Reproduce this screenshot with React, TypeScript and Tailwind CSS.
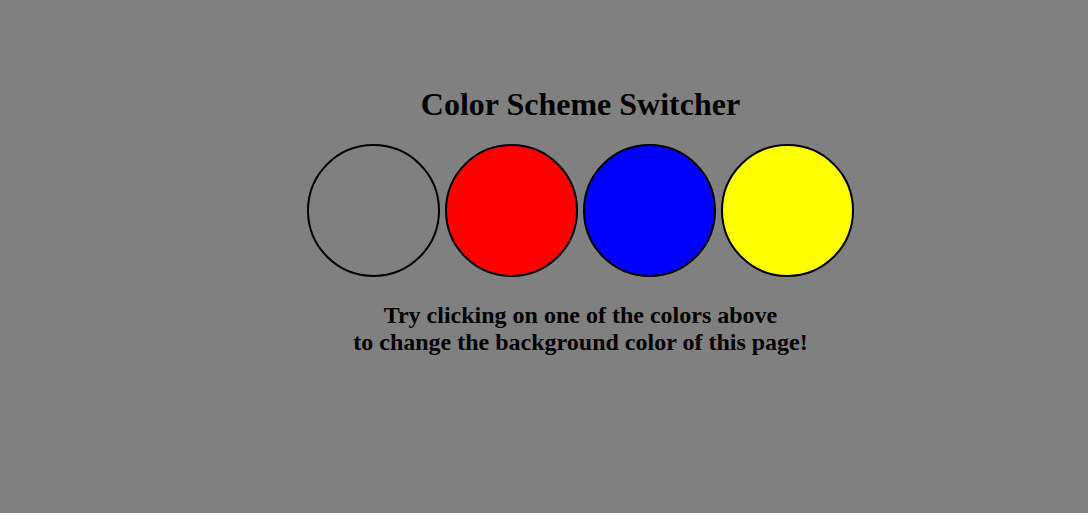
const swatches = [
  "bg-[#808080]",
  "bg-[#ff0000]",
  "bg-[#0000ff]",
  "bg-[#ffff00]",
];

export default function App() {
  return (
    <div className="min-h-[513px] w-full bg-[#808080] text-black font-['Liberation_Serif',serif]">
      <div className="flex flex-col items-center pl-[73px] pt-[86px]">
        <h1 className="text-[32px] leading-[37px] font-bold">Color Scheme Switcher</h1>
        <div className="flex gap-[5px] mt-[21px]">
          {swatches.map((c) => (
            <button
              key={c}
              className={"w-[133px] h-[133px] rounded-full border-2 border-black " + c}
            />
          ))}
        </div>
        <p className="mt-[25px] text-[24px] leading-[27px] font-bold text-center">
          Try clicking on one of the colors above
          <br />
          to change the background color of this page!
        </p>
      </div>
    </div>
  );
}
